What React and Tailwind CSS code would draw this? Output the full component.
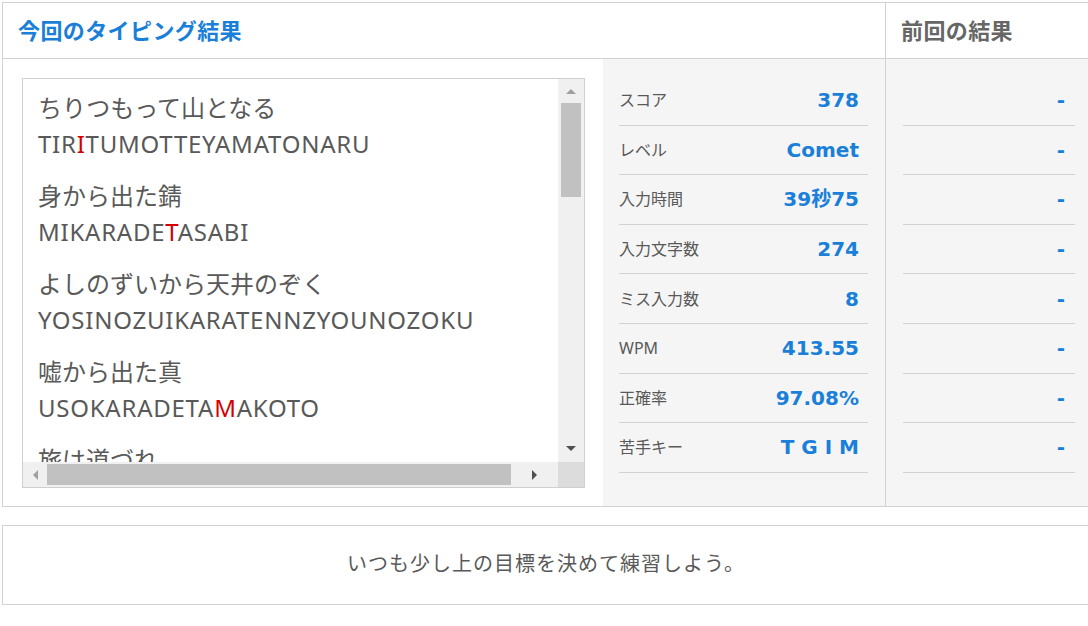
import React from 'react';

const font = { fontFamily: '"Noto Sans", "Noto Sans CJK JP", sans-serif' };
const numFont = { fontFamily: '"DejaVu Sans", "Noto Sans CJK JP", sans-serif' };

const phrases = [
  { kana: 'ちりつもって山となる', roma: 'TIRITUMOTTEYAMATONARU', miss: [3] },
  { kana: '身から出た錆', roma: 'MIKARADETASABI', miss: [8] },
  { kana: 'よしのずいから天井のぞく', roma: 'YOSINOZUIKARATENNZYOUNOZOKU', miss: [] },
  { kana: '嘘から出た真', roma: 'USOKARADETAMAKOTO', miss: [11] },
  { kana: '旅は道づれ', roma: 'TABIHAMITIDURE', miss: [] },
];

const stats = [
  ['スコア', '378'],
  ['レベル', 'Comet'],
  ['入力時間', '39秒75'],
  ['入力文字数', '274'],
  ['ミス入力数', '8'],
  ['WPM', '413.55'],
  ['正確率', '97.08%'],
  ['苦手キー', 'T G I M'],
];

function Roma({ text, miss }) {
  return (
    <div className="tracking-[0.75px]">
      {text.split('').map((ch, i) => (
        <span key={i} className={miss.includes(i) ? 'text-[#d40000]' : ''}>
          {ch}
        </span>
      ))}
    </div>
  );
}

function PhraseBox() {
  return (
    <div className="relative w-[563px] h-[410px] border border-[#cfcfcf] bg-white overflow-hidden">
      <div className="h-[383px] w-[535px] overflow-hidden pl-[15px] pt-[11px] text-[24px] leading-[36px] text-[#595959]">
        {phrases.map((p, i) => (
          <div key={i} className="mb-[16px] whitespace-nowrap">
            <div>{p.kana}</div>
            <Roma text={p.roma} miss={p.miss} />
          </div>
        ))}
      </div>
      {/* vertical scrollbar */}
      <div className="absolute right-0 top-0 w-[26px] h-[383px] bg-[#f0f0f0] flex flex-col items-center">
        <div className="h-[24px] flex items-center justify-center">
          <div className="w-0 h-0 border-l-[5px] border-r-[5px] border-b-[5px] border-l-transparent border-r-transparent border-b-[#a0a0a0]" />
        </div>
        <div className="w-[20px] h-[94px] bg-[#c1c1c1]" />
        <div className="flex-1" />
        <div className="h-[28px] flex items-center justify-center">
          <div className="w-0 h-0 border-l-[5px] border-r-[5px] border-t-[5px] border-l-transparent border-r-transparent border-t-[#505050]" />
        </div>
      </div>
      {/* horizontal scrollbar */}
      <div className="absolute left-0 bottom-0 w-full h-[25px] flex">
        <div className="flex-1 bg-[#f0f0f0] flex items-center">
          <div className="w-[24px] flex justify-center">
            <div className="w-0 h-0 border-t-[5px] border-b-[5px] border-r-[5px] border-t-transparent border-b-transparent border-r-[#a0a0a0]" />
          </div>
          <div className="w-[464px] h-[21px] bg-[#c1c1c1]" />
          <div className="flex-1 flex justify-center">
            <div className="w-0 h-0 border-t-[5px] border-b-[5px] border-l-[5px] border-t-transparent border-b-transparent border-l-[#505050]" />
          </div>
        </div>
        <div className="w-[26px] bg-[#dcdcdc]" />
      </div>
    </div>
  );
}

export default function App() {
  return (
    <div className="w-[1088px] h-[626px] overflow-hidden bg-white" style={font}>
      <div className="ml-[2px] mt-[2px] w-[1090px]">
        <div className="flex border border-[#d2d2d2]">
          {/* current result */}
          <div className="w-[883px] border-r border-[#d2d2d2]">
            <div className="h-[56px] flex items-center pl-[15px] border-b border-[#d2d2d2] text-[22px] tracking-[0.4px] font-bold text-[#1a7fd8]">
              今回のタイピング結果
            </div>
            <div className="flex">
              <div className="w-[600px] pl-[19px] pt-[19px] pb-[18px]">
                <PhraseBox />
              </div>
              <div className="flex-1 bg-[#f5f5f5] pl-[16px] pr-[17px] pt-[17px]">
                {stats.map(([label, value]) => (
                  <div
                    key={label}
                    className="h-[49.6px] flex items-center justify-between border-b border-[#d2d2d2] pr-[9px]"
                  >
                    <span className="text-[16px] text-[#595959]">{label}</span>
                    <span className="text-[20px] font-bold text-[#1a7fd8] whitespace-pre" style={numFont}>
                      {value}
                    </span>
                  </div>
                ))}
              </div>
            </div>
          </div>
          {/* previous result */}
          <div className="flex-1">
            <div className="h-[56px] flex items-center pl-[15px] border-b border-[#d2d2d2] text-[22px] tracking-[0.4px] font-bold text-[#666]">
              前回の結果
            </div>
            <div className="bg-[#f5f5f5] h-[447px] pl-[17px] pr-[16px] pt-[17px]">
              {stats.map(([label]) => (
                <div
                  key={label}
                  className="h-[49.6px] flex items-center justify-end border-b border-[#d2d2d2] pr-[10px] text-[20px] font-bold text-[#1a7fd8]"
                  style={numFont}
                >
                  -
                </div>
              ))}
            </div>
          </div>
        </div>
        <div className="mt-[18px] h-[80px] w-[1090px] border border-[#d2d2d2] flex items-center justify-center">
          <span className="text-[20px] tracking-[1px] text-[#595959] -ml-[2px] -mt-[3px]">いつも少し上の目標を決めて練習しよう。</span>
        </div>
      </div>
    </div>
  );
}
